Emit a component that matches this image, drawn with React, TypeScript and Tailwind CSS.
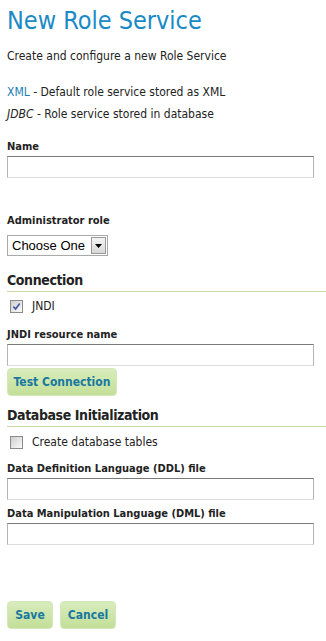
import React from "react";

function Field({ label }: { label: string }) {
  return (
    <div>
      <div className="text-[11px] font-bold leading-[14px] text-[#222]">{label}</div>
      <input
        type="text"
        className="mt-[2px] block h-[22px] w-[307px] border border-[#b5b5b5] border-t-[#7a7a7a] border-b-[#dcdcdc] bg-white"
      />
    </div>
  );
}

function Check({ label, checked }: { label: string; checked?: boolean }) {
  return (
    <label className="flex items-center gap-[9px] pl-[3px] text-[12px] leading-[13px] text-[#222]">
      <span className="flex h-[13px] w-[13px] items-center justify-center border border-[#8a8a8a] bg-gradient-to-br from-[#cfcfcf] to-[#fafafa]">
        {checked && (
          <svg viewBox="0 0 10 10" className="h-[9px] w-[9px]">
            <path d="M1.5 5.2 L4 7.8 L8.6 1.6" fill="none" stroke="#3d57a6" strokeWidth="1.8" />
          </svg>
        )}
      </span>
      {label}
    </label>
  );
}

function Section({ title }: { title: string }) {
  return (
    <div className="border-b border-[#c4dca4] pb-[3px] text-[14px] font-bold leading-[16px] tracking-[-0.4px] text-[#222]">
      {title}
    </div>
  );
}

function Btn({ children, w }: { children: React.ReactNode; w: string }) {
  return (
    <button
      className={`${w} h-[28px] rounded-[4px] border border-[#d3e7ba] bg-gradient-to-b from-[#d8ecbb] to-[#c3df99] text-[12px] font-bold text-[#18789f]`}
    >
      {children}
    </button>
  );
}

export default function App() {
  return (
    <div className="h-[641px] w-[326px] bg-white pl-[7px] font-['DejaVu_Sans_Condensed','DejaVu_Sans',sans-serif] text-[#222]">
      <h1 className="pt-[6px] text-[25px] leading-[30px] text-[#1a8ac6]">New Role Service</h1>
      <p className="mt-[12px] text-[12px] leading-[16px]">Create and configure a new Role Service</p>
      <p className="mt-[20px] text-[12px] leading-[16px]">
        <span className="text-[#1a7db4]">XML</span> - Default role service stored as XML
      </p>
      <p className="mt-[6px] text-[12px] leading-[16px]">
        <i>JDBC</i> - Role service stored in database
      </p>

      <div className="mt-[18px]">
        <Field label="Name" />
      </div>

      <div className="mt-[36px] text-[11px] font-bold leading-[14px]">Administrator role</div>
      <div className="mt-[7px] flex h-[21px] w-[101px] items-center border border-[#a9a9a9] bg-white font-['Liberation_Sans',Arial,sans-serif] text-[13px] text-black">
        <span className="flex-1 pl-[4px]">Choose One</span>
        <span className="mr-[1px] flex h-[17px] w-[15px] items-center justify-center border border-[#999] bg-gradient-to-b from-[#f4f4f4] to-[#d8d8d8]">
          <svg viewBox="0 0 7 4" className="h-[4px] w-[7px]">
            <path d="M0 0 H7 L3.5 4 Z" fill="#000" />
          </svg>
        </span>
      </div>

      <div className="mt-[16px]">
        <Section title="Connection" />
      </div>
      <div className="mt-[8px]">
        <Check label="JNDI" checked />
      </div>
      <div className="mt-[15px]">
        <Field label="JNDI resource name" />
      </div>
      <div className="mt-[2px]">
        <Btn w="w-[110px]">Test Connection</Btn>
      </div>

      <div className="mt-[11px]">
        <Section title="Database Initialization" />
      </div>
      <div className="mt-[9px]">
        <Check label="Create database tables" />
      </div>
      <div className="mt-[13px]">
        <Field label="Data Definition Language (DDL) file" />
      </div>
      <div className="mt-[7px]">
        <Field label="Data Manipulation Language (DML) file" />
      </div>

      <div className="mt-[56px] flex gap-[7px]">
        <Btn w="w-[46px]">Save</Btn>
        <Btn w="w-[56px]">Cancel</Btn>
      </div>
    </div>
  );
}
